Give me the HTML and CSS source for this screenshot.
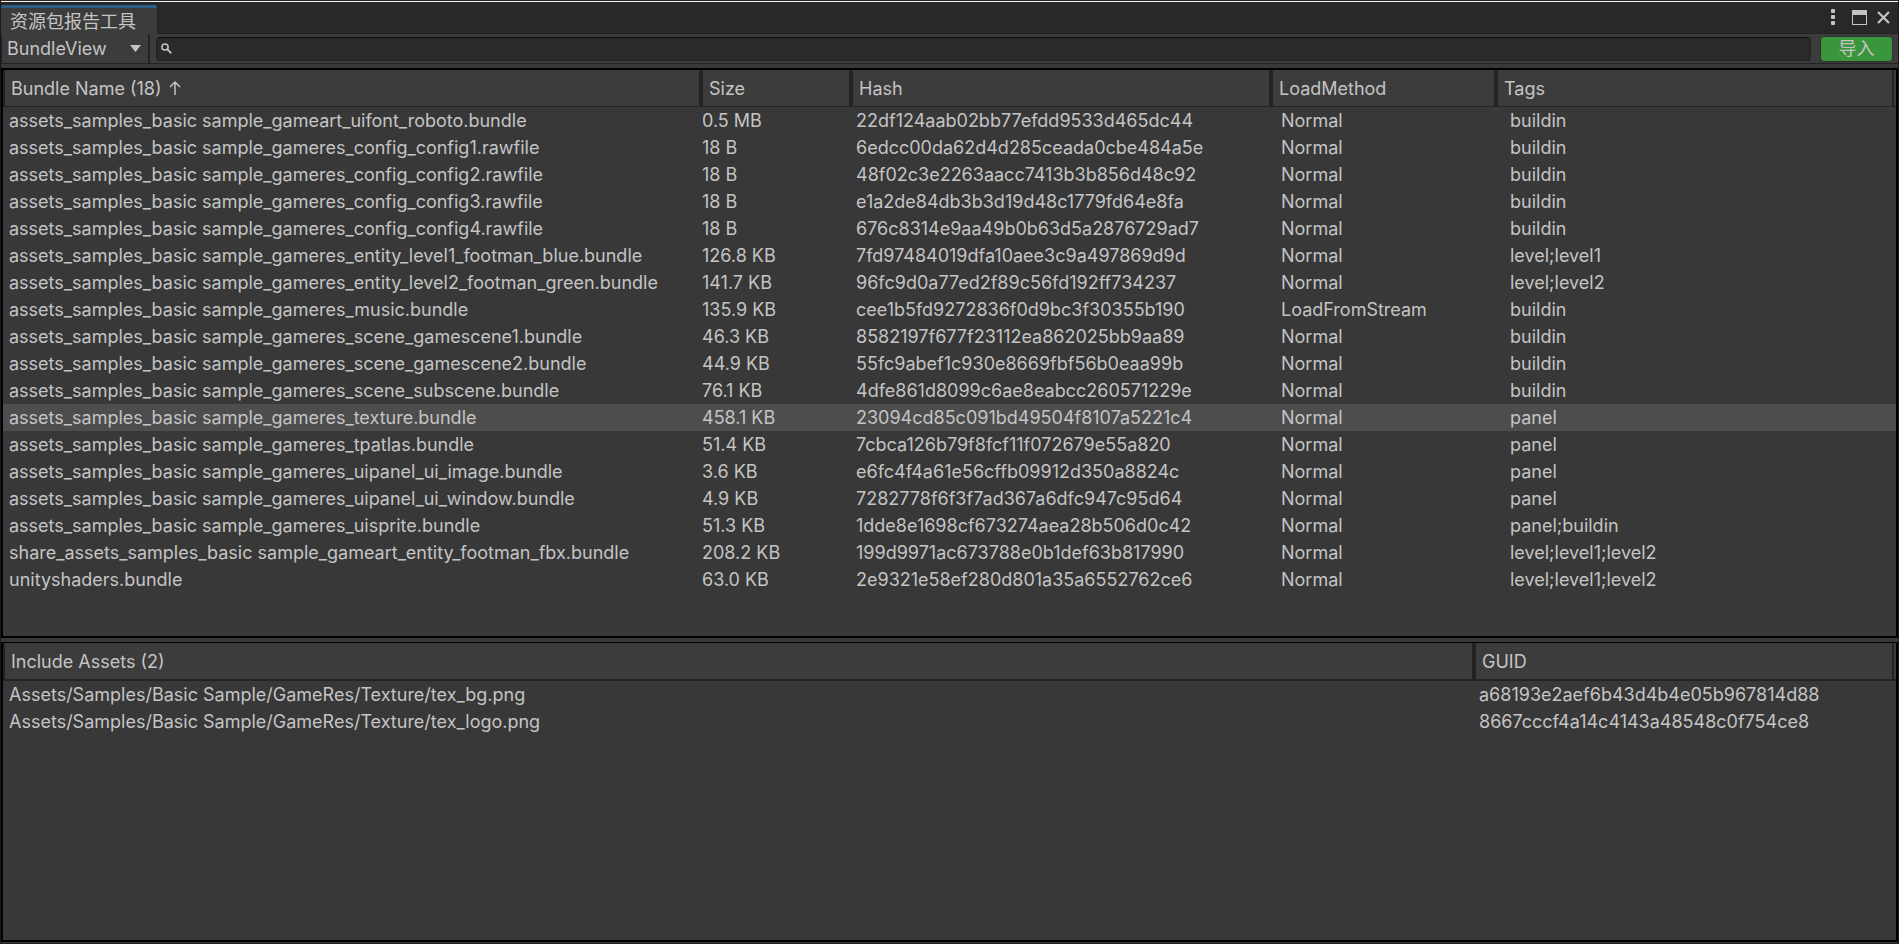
FILE: index.html
```html
<!DOCTYPE html>
<html lang="zh-CN">
<head>
<meta charset="utf-8">
<title>资源包报告工具</title>
<link rel="stylesheet" href="styles.css">
</head>
<body>
<div class="window">
  <header class="titlebar">
    <h1 class="tab">资源包报告工具</h1>
    <div class="window-buttons">
      <button class="icon-button" type="button" aria-label="Menu"><svg width="4" height="16" viewBox="0 0 4 16" fill="currentColor"><rect x="0" y="0" width="4" height="4" rx="1"/><rect x="0" y="6" width="4" height="4" rx="1"/><rect x="0" y="12" width="4" height="4" rx="1"/></svg></button>
      <button class="icon-button" type="button" aria-label="Maximize"><svg width="15" height="15" viewBox="0 0 15 15"><path d="M0 0h15v15H0zM1 5v9h13V5z" fill="currentColor" fill-rule="evenodd"/></svg></button>
      <button class="icon-button" type="button" aria-label="Close"><svg width="13" height="13" viewBox="0 0 13 13"><path d="M1 1l11 11M12 1L1 12" stroke="currentColor" stroke-width="2.2"/></svg></button>
    </div>
  </header>
  <div class="toolbar">
    <div class="view-picker">
      <select class="view-select" aria-label="View"><option>BundleView</option></select>
      <svg class="caret" width="11" height="7" viewBox="0 0 11 7"><path d="M0 0h11L5.500 7z" fill="currentColor"/></svg>
    </div>
    <label class="search">
      <svg width="11" height="11" viewBox="0 0 11 11" fill="none" stroke="currentColor"><circle cx="4" cy="4" r="3.100" stroke-width="1.500"/><path d="M6.200 6.200L10.300 10.300" stroke-width="1.800"/></svg>
      <input class="search-input" type="text" aria-label="Search">
    </label>
    <button class="import" type="button">导入</button>
  </div>
  <main class="panes">
    <section class="pane pane-bundles">
      <table class="grid bundles">
        <colgroup><col class="c-name"><col class="c-size"><col class="c-hash"><col class="c-method"><col></colgroup>
        <thead><tr><th>Bundle Name (18) <svg class="sort" width="12" height="14" viewBox="0 0 12 14" fill="none" stroke="currentColor" stroke-width="1.500"><path d="M6 14V1M1 6l5-5 5 5"/></svg></th><th>Size</th><th>Hash</th><th>LoadMethod</th><th>Tags</th></tr></thead>
        <tbody>
          <tr><td>assets_samples_basic sample_gameart_uifont_roboto.bundle</td><td>0.5 MB</td><td>22df124aab02bb77efdd9533d465dc44</td><td>Normal</td><td>buildin</td></tr>
          <tr><td>assets_samples_basic sample_gameres_config_config1.rawfile</td><td>18 B</td><td>6edcc00da62d4d285ceada0cbe484a5e</td><td>Normal</td><td>buildin</td></tr>
          <tr><td>assets_samples_basic sample_gameres_config_config2.rawfile</td><td>18 B</td><td>48f02c3e2263aacc7413b3b856d48c92</td><td>Normal</td><td>buildin</td></tr>
          <tr><td>assets_samples_basic sample_gameres_config_config3.rawfile</td><td>18 B</td><td>e1a2de84db3b3d19d48c1779fd64e8fa</td><td>Normal</td><td>buildin</td></tr>
          <tr><td>assets_samples_basic sample_gameres_config_config4.rawfile</td><td>18 B</td><td>676c8314e9aa49b0b63d5a2876729ad7</td><td>Normal</td><td>buildin</td></tr>
          <tr><td>assets_samples_basic sample_gameres_entity_level1_footman_blue.bundle</td><td>126.8 KB</td><td>7fd97484019dfa10aee3c9a497869d9d</td><td>Normal</td><td>level;level1</td></tr>
          <tr><td>assets_samples_basic sample_gameres_entity_level2_footman_green.bundle</td><td>141.7 KB</td><td>96fc9d0a77ed2f89c56fd192ff734237</td><td>Normal</td><td>level;level2</td></tr>
          <tr><td>assets_samples_basic sample_gameres_music.bundle</td><td>135.9 KB</td><td>cee1b5fd9272836f0d9bc3f30355b190</td><td>LoadFromStream</td><td>buildin</td></tr>
          <tr><td>assets_samples_basic sample_gameres_scene_gamescene1.bundle</td><td>46.3 KB</td><td>8582197f677f23112ea862025bb9aa89</td><td>Normal</td><td>buildin</td></tr>
          <tr><td>assets_samples_basic sample_gameres_scene_gamescene2.bundle</td><td>44.9 KB</td><td>55fc9abef1c930e8669fbf56b0eaa99b</td><td>Normal</td><td>buildin</td></tr>
          <tr><td>assets_samples_basic sample_gameres_scene_subscene.bundle</td><td>76.1 KB</td><td>4dfe861d8099c6ae8eabcc260571229e</td><td>Normal</td><td>buildin</td></tr>
          <tr class="selected"><td>assets_samples_basic sample_gameres_texture.bundle</td><td>458.1 KB</td><td>23094cd85c091bd49504f8107a5221c4</td><td>Normal</td><td>panel</td></tr>
          <tr><td>assets_samples_basic sample_gameres_tpatlas.bundle</td><td>51.4 KB</td><td>7cbca126b79f8fcf11f072679e55a820</td><td>Normal</td><td>panel</td></tr>
          <tr><td>assets_samples_basic sample_gameres_uipanel_ui_image.bundle</td><td>3.6 KB</td><td>e6fc4f4a61e56cffb09912d350a8824c</td><td>Normal</td><td>panel</td></tr>
          <tr><td>assets_samples_basic sample_gameres_uipanel_ui_window.bundle</td><td>4.9 KB</td><td>7282778f6f3f7ad367a6dfc947c95d64</td><td>Normal</td><td>panel</td></tr>
          <tr><td>assets_samples_basic sample_gameres_uisprite.bundle</td><td>51.3 KB</td><td>1dde8e1698cf673274aea28b506d0c42</td><td>Normal</td><td>panel;buildin</td></tr>
          <tr><td>share_assets_samples_basic sample_gameart_entity_footman_fbx.bundle</td><td>208.2 KB</td><td>199d9971ac673788e0b1def63b817990</td><td>Normal</td><td>level;level1;level2</td></tr>
          <tr><td>unityshaders.bundle</td><td>63.0 KB</td><td>2e9321e58ef280d801a35a6552762ce6</td><td>Normal</td><td>level;level1;level2</td></tr>
        </tbody>
      </table>
    </section>
    <section class="pane pane-assets">
      <table class="grid assets">
        <colgroup><col><col class="c-guid"></colgroup>
        <thead><tr><th>Include Assets (2)</th><th>GUID</th></tr></thead>
        <tbody>
          <tr><td>Assets/Samples/Basic Sample/GameRes/Texture/tex_bg.png</td><td>a68193e2aef6b43d4b4e05b967814d88</td></tr>
          <tr><td>Assets/Samples/Basic Sample/GameRes/Texture/tex_logo.png</td><td>8667cccf4a14c4143a48548c0f754ce8</td></tr>
        </tbody>
      </table>
    </section>
  </main>
</div>
</body>
</html>
```
FILE: styles.css
```css
:root {
  --panel: #383838;
  --bar: #3c3c3c;
  --line: #232323;
  --text: #c4c4c4;
}
* { box-sizing: border-box; }
body {
  margin: 0;
  background: var(--panel);
  color: var(--text);
  font: 18px/27px Inter, "Noto Sans CJK SC", sans-serif;
}
button, input, select { font: inherit; color: inherit; }
svg { display: block; flex: none; }

.window {
  display: flex;
  flex-direction: column;
  height: 100vh;
  border-left: 1px solid #191919;
  border-right: 1px solid #191919;
  border-bottom: 1px solid var(--line);
}

.titlebar {
  display: flex;
  justify-content: space-between;
  height: 34px;
  flex: none;
  padding-top: 3px;
  background: #282828;
  border-top: 1px solid #282828;
  border-bottom: 1px solid var(--line);
  box-shadow: inset 0 1px #f4f4f4;
}
.tab {
  margin: 1px 0 -1px;
  padding: 0 21px 0 9px;
  border-top: 3px solid #2c5d87;
  border-radius: 2px 2px 0 0;
  background: var(--bar);
  font-size: 18px;
  font-weight: 400;
  line-height: 27px;
}
.window-buttons {
  display: flex;
  align-items: center;
  gap: 10px;
  padding: 0 8px 3px 0;
}
.window-buttons .icon-button:first-child { margin-right: 7px; }
.icon-button { padding: 0; border: 0; background: none; }

.toolbar {
  display: flex;
  align-items: center;
  height: 30px;
  flex: none;
  padding-right: 5px;
  background: var(--bar);
  border-bottom: 1px solid var(--line);
}
.view-picker {
  display: grid;
  align-items: center;
  width: 149px;
  height: 29px;
  border-left: 1px solid var(--line);
  border-right: 2px solid var(--line);
}
.view-select {
  grid-area: 1 / 1;
  width: 100%;
  height: 29px;
  padding: 0 24px 0 5px;
  border: 0;
  background: none;
  appearance: none;
}
.caret {
  grid-area: 1 / 1;
  justify-self: end;
  margin-right: 7px;
  pointer-events: none;
}
.search {
  display: flex;
  flex: 1;
  align-items: center;
  gap: 6px;
  height: 24px;
  margin: 0 9px 0 6px;
  padding-left: 4px;
  border: 1px solid #212121;
  border-top-color: #0d0d0d;
  border-radius: 4px;
  background: #2a2a2a;
}
.search-input {
  flex: 1;
  height: 20px;
  padding: 0;
  border: 0;
  outline: 0;
  background: none;
}
.import {
  width: 73px;
  height: 26px;
  padding: 0;
  border: 1px solid #303030;
  border-radius: 4px;
  background: #3a963a;
  line-height: 24px;
}

.panes {
  display: flex;
  flex: 1;
  flex-direction: column;
  gap: 4px;
  padding: 4px 0 1px;
  min-height: 0;
}
.pane {
  border: 2px solid #000;
  overflow: hidden;
}
.pane-bundles { flex: 571 1 0; }
.pane-assets {
  flex: 299 1 0;
  border-top-width: 1px;
}

.grid {
  width: 100%;
  border-spacing: 0;
  table-layout: fixed;
}
.grid th {
  height: 37px;
  padding: 0 6px;
  background: var(--bar);
  border-left: 4px solid var(--line);
  border-bottom: 1px solid var(--line);
  font-weight: 400;
  text-align: left;
}
.grid th:first-child { border-left-width: 2px; }
.grid th:last-child { box-shadow: inset -2px 0 var(--bar), inset -4px 0 var(--line); }
.assets th {
  height: 38px;
  border-bottom-width: 2px;
}
.grid td {
  height: 27px;
  padding: 0 0 0 6px;
  white-space: nowrap;
}
.grid td:nth-child(3) { padding-left: 7px; }
.bundles td:nth-child(2) { padding-left: 3px; }
.assets td:nth-child(2) { padding-left: 7px; }
.bundles td:nth-child(4) { padding-left: 12px; }
.bundles td:nth-child(5) { padding-left: 16px; }
.selected td { background: #4d4d4d; }
.sort { display: inline-block; margin-left: 2px; }
.c-name { width: 696px; }
.c-size { width: 150px; }
.c-hash { width: 420px; }
.c-method { width: 225px; }
.c-guid { width: 424px; }
```
